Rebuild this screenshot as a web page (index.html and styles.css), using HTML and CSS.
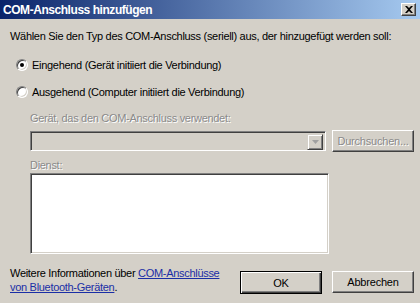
FILE: index.html
```html
<!DOCTYPE html>
<html lang="de">
<head>
    <meta charset="UTF-8">
    <title>COM-Anschluss hinzufügen</title>
    <link rel="stylesheet" href="styles.css">
</head>
<body>
    <div class="window">
        <div class="titlebar">
            <span class="title">COM-Anschluss hinzufügen</span>
            <span class="close">
                <svg width="8" height="7" viewBox="0 0 8 7"><path d="M0 0h2l2 2 2-2h2L5 3.5 8 7H6L4 5 2 7H0l3-3.5z" fill="#000"/></svg>
            </span>
        </div>

        <div class="content">
            <p class="intro">Wählen Sie den Typ des COM-Anschluss (seriell) aus, der hinzugefügt werden soll:</p>

            <label class="radio-row first">
                <span class="radio checked"></span>
                Eingehend (Gerät initiiert die Verbindung)
            </label>
            <label class="radio-row">
                <span class="radio"></span>
                Ausgehend (Computer initiiert die Verbindung)
            </label>

            <div class="group">
                <div class="label disabled">Gerät, das den COM-Anschluss verwendet:</div>
                <div class="combo-row">
                    <div class="combo">
                        <span class="combo-btn">
                            <svg width="7" height="4" viewBox="0 0 7 4"><path d="M0 0h7L3.5 4z" fill="#a0a0a0"/></svg>
                        </span>
                    </div>
                    <button class="btn" disabled>Durchsuchen...</button>
                </div>

                <div class="label disabled service">Dienst:</div>
                <div class="listbox"></div>
            </div>

            <div class="footer">
                <p class="more">Weitere Informationen über <a href="#">COM-Anschlüsse<br>von Bluetooth-Geräten</a>.</p>
                <button class="btn default">OK</button>
                <button class="btn">Abbrechen</button>
            </div>
        </div>
    </div>
</body>
</html>
```

FILE: styles.css
```css
body {
    margin: 0;
    background: #d4d0c8;
    font-family: 'Liberation Sans', Arial, sans-serif;
    font-size: 11px;
    letter-spacing: -0.3px;
    color: #000;
}
.window {
    width: 420px;
    height: 303px;
    background: #d4d0c8;
    overflow: hidden;
}
.titlebar {
    height: 19px;
    background: linear-gradient(90deg, #0a246a 0%, #a6caf0 100%);
    display: flex;
    align-items: center;
    justify-content: space-between;
    padding: 0 4px 0 3px;
}
.title {
    color: white;
    font-weight: bold;
    font-size: 12px;
    letter-spacing: -0.45px;
}
.close {
    width: 15px;
    height: 13px;
    box-sizing: border-box;
    background: #d4d0c8;
    border: 1px solid;
    border-color: #fff #404040 #404040 #fff;
    box-shadow: inset -1px -1px #808080;
    display: flex;
    align-items: center;
    justify-content: center;
}
.content {
    padding: 0 6px 0 10px;
}
.intro {
    margin: 11px 0 0;
    line-height: 13px;
}
.radio-row {
    display: flex;
    align-items: center;
    gap: 4px;
    margin: 14px 0 0 6px;
    height: 13px;
}
.radio-row.first {
    margin-top: 15px;
}
.radio {
    width: 12px;
    height: 12px;
    border-radius: 50%;
    background: white;
    box-sizing: border-box;
    border: 1px solid;
    border-color: #808080 #fff #fff #808080;
    box-shadow: inset 1px 1px #404040, inset -1px -1px #d4d0c8;
    display: flex;
    align-items: center;
    justify-content: center;
}
.radio.checked::after {
    content: "";
    width: 4px;
    height: 4px;
    border-radius: 50%;
    background: #000;
}
.group {
    padding-left: 20px;
    margin-top: 14px;
}
.label {
    line-height: 13px;
}
.disabled {
    color: #8a8a8a;
    text-shadow: 1px 1px #fff;
}
.combo-row {
    display: flex;
    align-items: center;
    gap: 6px;
    margin-top: 5px;
}
.combo {
    width: 296px;
    height: 20px;
    box-sizing: border-box;
    border: 1px solid;
    border-color: #808080 #fff #fff #808080;
    box-shadow: inset 1px 1px #404040, inset -1px -1px #d4d0c8;
    display: flex;
    justify-content: flex-end;
    padding: 2px;
}
.combo-btn {
    width: 16px;
    height: 16px;
    box-sizing: border-box;
    border: 1px solid;
    border-color: #d4d0c8 #404040 #404040 #d4d0c8;
    box-shadow: inset 1px 1px #fff, inset -1px -1px #808080;
    display: flex;
    align-items: center;
    justify-content: center;
}
.btn {
    font-family: inherit;
    font-size: 11px;
    letter-spacing: -0.2px;
    background: #d4d0c8;
    color: #000;
    height: 22px;
    width: 82px;
    padding: 0;
    box-sizing: border-box;
    border: 1px solid;
    border-color: #fff #404040 #404040 #fff;
    box-shadow: inset -1px -1px #808080;
}
.btn:disabled {
    color: #8a8a8a;
    text-shadow: 1px 1px #fff;
}
.btn.default {
    height: 23px;
    border: 1px solid #000;
    box-shadow: inset 1px 1px #fff, inset -1px -1px #404040, inset -2px -2px #808080;
}
.service {
    margin-top: 7px;
}
.listbox {
    width: 299px;
    height: 81px;
    margin-top: 1px;
    box-sizing: border-box;
    background: white;
    border: 1px solid;
    border-color: #808080 #fff #fff #808080;
    box-shadow: inset 1px 1px #404040, inset -1px -1px #d4d0c8;
}
.footer {
    display: flex;
    align-items: flex-start;
    gap: 10px;
    margin-top: 12px;
}
.more {
    margin: 0;
    flex: 1;
    line-height: 14px;
}
.more a {
    color: #1a2ea6;
}
.footer .btn {
    margin-top: 5px;
}
```
